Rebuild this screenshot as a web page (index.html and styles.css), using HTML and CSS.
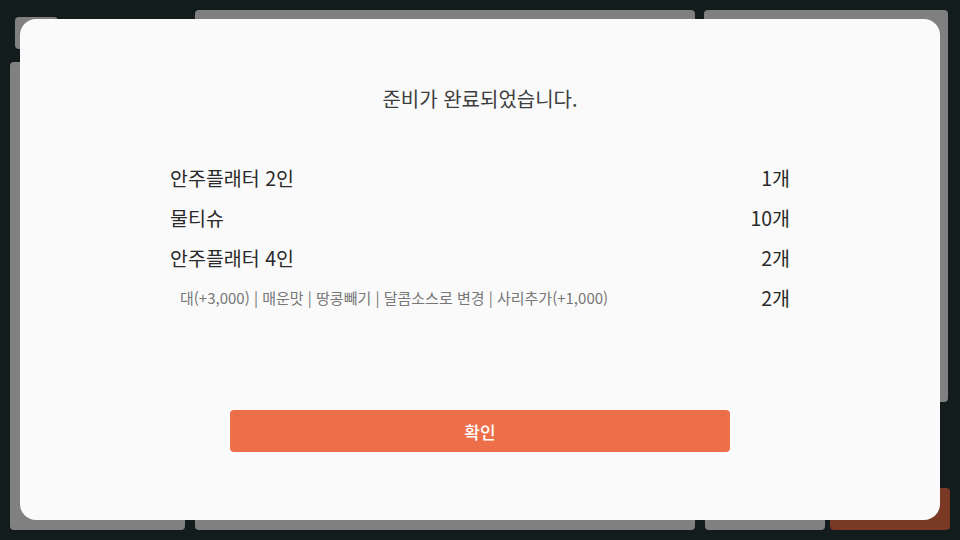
FILE: index.html
```html
<!DOCTYPE html>
<html lang="ko">
<head>
   <meta charset="UTF-8">
   <meta name="viewport" content="width=device-width, initial-scale=1.0">
   <title>준비 완료</title>
   <link rel="stylesheet" href="styles.css">
</head>
<body>
   <div class="board">
       <div class="col col-left">
           <div class="card card-tab"></div>
           <div class="card card-fill"></div>
       </div>
       <div class="col col-center">
           <div class="card card-fill"></div>
       </div>
       <div class="col col-right">
           <div class="card card-top"></div>
           <div class="bottom-row">
               <div class="card card-small"></div>
               <div class="card card-small card-accent"></div>
           </div>
       </div>
   </div>

   <div class="modal">
       <div class="modal-title">준비가 완료되었습니다.</div>
       <div class="item-list">
           <div class="item-row">
               <span class="item-name">안주플래터 2인</span>
               <span class="item-qty">1개</span>
           </div>
           <div class="item-row">
               <span class="item-name">물티슈</span>
               <span class="item-qty">10개</span>
           </div>
           <div class="item-row">
               <span class="item-name">안주플래터 4인</span>
               <span class="item-qty">2개</span>
           </div>
           <div class="item-row">
               <span class="item-option">대(+3,000) | 매운맛 | 땅콩빼기 | 달콤소스로 변경 | 사리추가(+1,000)</span>
               <span class="item-qty">2개</span>
           </div>
       </div>
       <button class="confirm-button">확인</button>
   </div>
</body>
</html>
```

FILE: styles.css
```css
body {
    margin: 0;
    width: 960px;
    height: 540px;
    background-color: #131c1c;
    overflow: hidden;
    position: relative;
    font-family: "Noto Sans CJK KR", "Noto Sans", sans-serif;
}
.board {
    box-sizing: border-box;
    height: 540px;
    padding: 10px 10px 10px 10px;
    display: grid;
    grid-template-columns: 175px 500px 1fr;
    column-gap: 10px;
}
.col {
    display: flex;
    flex-direction: column;
}
.col-left {
    gap: 13px;
}
.col-right {
    justify-content: space-between;
    margin-left: -1px;
}
.card {
    background-color: #808080;
    border-radius: 4px;
}
.card-tab {
    width: 43px;
    height: 32px;
    margin: 7px 0 0 5px;
}
.card-fill {
    flex: 1;
}
.card-top {
    height: 392px;
    margin-right: 2px;
}
.bottom-row {
    display: flex;
    gap: 5px;
    height: 42px;
    padding-left: 1px;
}
.card-small {
    width: 120px;
}
.card-accent {
    background-color: #7a3925;
}
.modal {
    position: absolute;
    top: 19px;
    left: 20px;
    width: 920px;
    height: 501px;
    box-sizing: border-box;
    padding: 66px 0 68px;
    background-color: #fafafa;
    border-radius: 16px;
    display: flex;
    flex-direction: column;
    align-items: center;
}
.modal-title {
    font-size: 20px;
    line-height: 28px;
    font-weight: 400;
    color: #3e3e3e;
}
.item-list {
    width: 620px;
    margin-top: 44px;
}
.item-row {
    height: 40px;
    display: flex;
    justify-content: space-between;
    align-items: center;
}
.item-name,
.item-qty {
    font-size: 19.5px;
    font-weight: 400;
    color: #2a2a2a;
}
.item-option {
    font-size: 15px;
    color: #777;
    padding-left: 10px;
}
.confirm-button {
    margin-top: auto;
    width: 500px;
    height: 42px;
    border: none;
    border-radius: 4px;
    background-color: #ec6f4a;
    color: #fff;
    font-family: inherit;
    font-size: 17px;
    font-weight: 500;
    cursor: pointer;
}
```
